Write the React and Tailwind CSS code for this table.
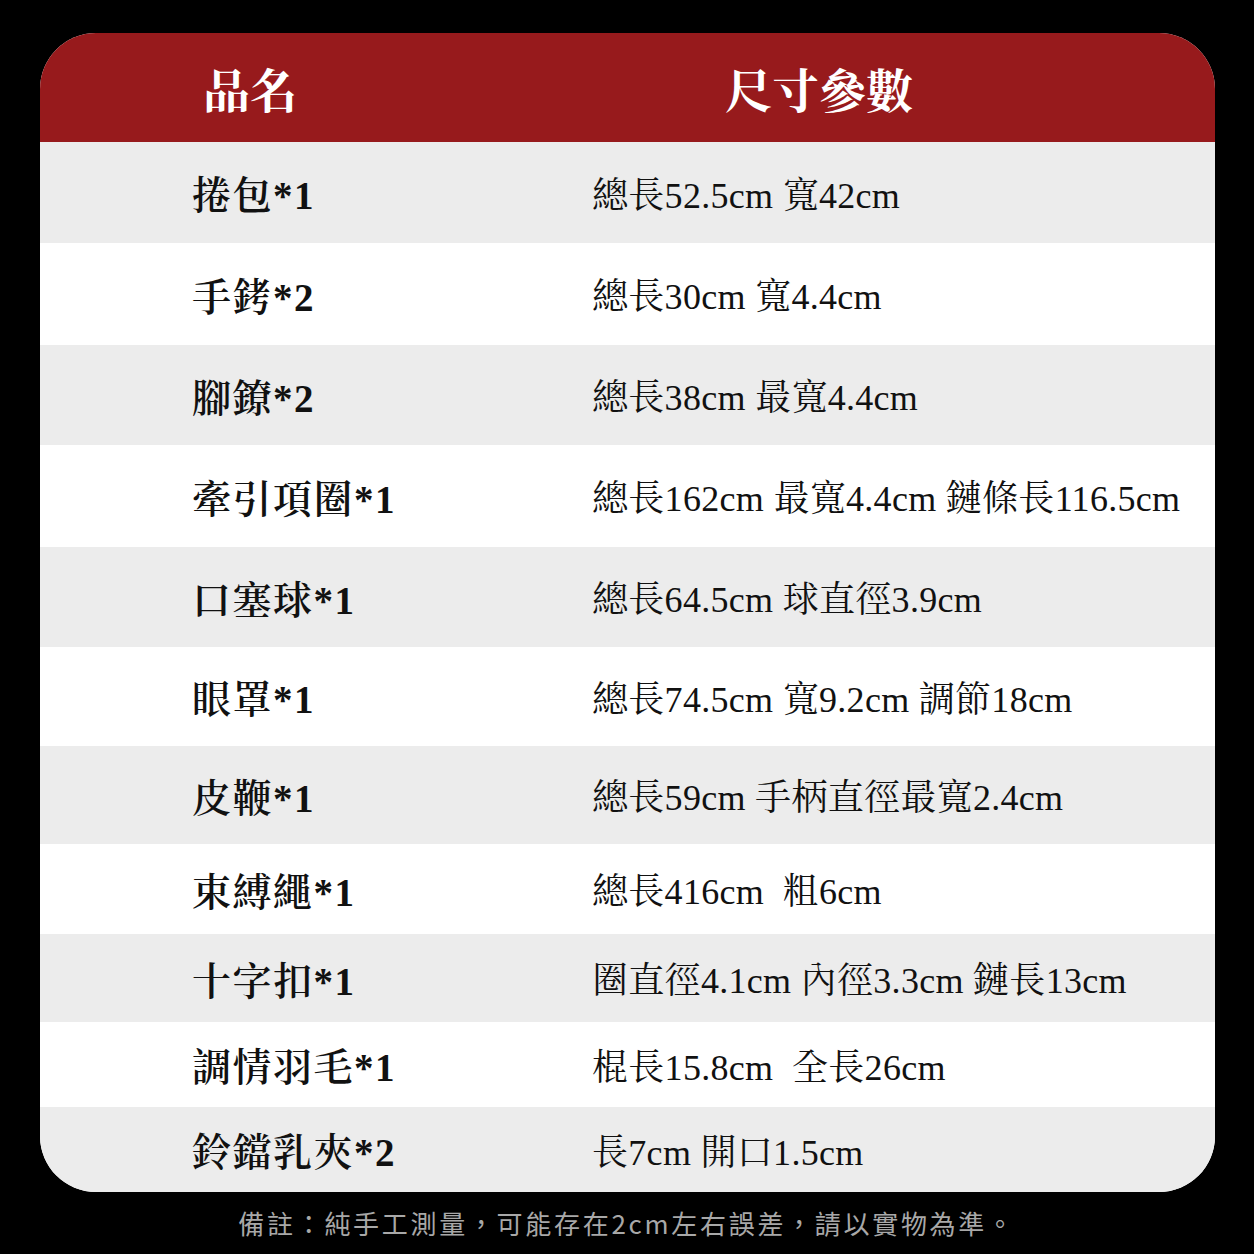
const rows = [
  ["捲包*1", "總長52.5cm 寬42cm", "h-[101px]", "bg-[#ececec]"],
  ["手銬*2", "總長30cm 寬4.4cm", "h-[102px]", "bg-white"],
  ["腳鐐*2", "總長38cm 最寬4.4cm", "h-[100px]", "bg-[#ececec]"],
  ["牽引項圈*1", "總長162cm 最寬4.4cm 鏈條長116.5cm", "h-[102px]", "bg-white"],
  ["口塞球*1", "總長64.5cm 球直徑3.9cm", "h-[100px]", "bg-[#ececec]"],
  ["眼罩*1", "總長74.5cm 寬9.2cm 調節18cm", "h-[99px]", "bg-white"],
  ["皮鞭*1", "總長59cm 手柄直徑最寬2.4cm", "h-[98px]", "bg-[#ececec]"],
  ["束縛繩*1", "總長416cm  粗6cm", "h-[90px]", "bg-white"],
  ["十字扣*1", "圈直徑4.1cm 內徑3.3cm 鏈長13cm", "h-[88px]", "bg-[#ececec]"],
  ["調情羽毛*1", "棍長15.8cm  全長26cm", "h-[85px]", "bg-white"],
  ["鈴鐺乳夾*2", "長7cm 開口1.5cm", "h-[85px]", "bg-[#ececec]"],
]

const serif = "font-['Liberation_Serif','Noto_Serif_CJK_TC','Noto_Sans_CJK_TC',serif]"

const App = () => {
  return (
    <div className="w-[1254px] h-[1254px] bg-black pt-[33px] px-[40px]">
      <div className="w-[1175px] rounded-[56px] overflow-hidden bg-white">
        <div className={`h-[109px] pt-[9px] bg-[#971a1c] flex items-center text-white text-[47px] font-bold ${serif}`}>
          <div className="pl-[163px] w-[685px] leading-none">品名</div>
          <div className="leading-none">尺寸參數</div>
        </div>
        {rows.map((r) => (
          <div key={r[0]} className={`flex items-center pt-[6px] ${r[2]} ${r[3]} ${serif} text-[#111]`}>
            <div className="pl-[152px] w-[552px] text-[39px] font-semibold tracking-[1.5px] leading-none">{r[0]}</div>
            <div className="text-[36px] tracking-[0.3px] leading-none whitespace-pre">{r[1]}</div>
          </div>
        ))}
      </div>
      <div className="text-center text-[#a8a8a8] text-[26px] mt-[18px] leading-none tracking-[2.7px] font-['Noto_Sans_CJK_TC',sans-serif]">
        備註：純手工測量，可能存在2cm左右誤差，請以實物為準。
      </div>
    </div>
  )
}

export default App
